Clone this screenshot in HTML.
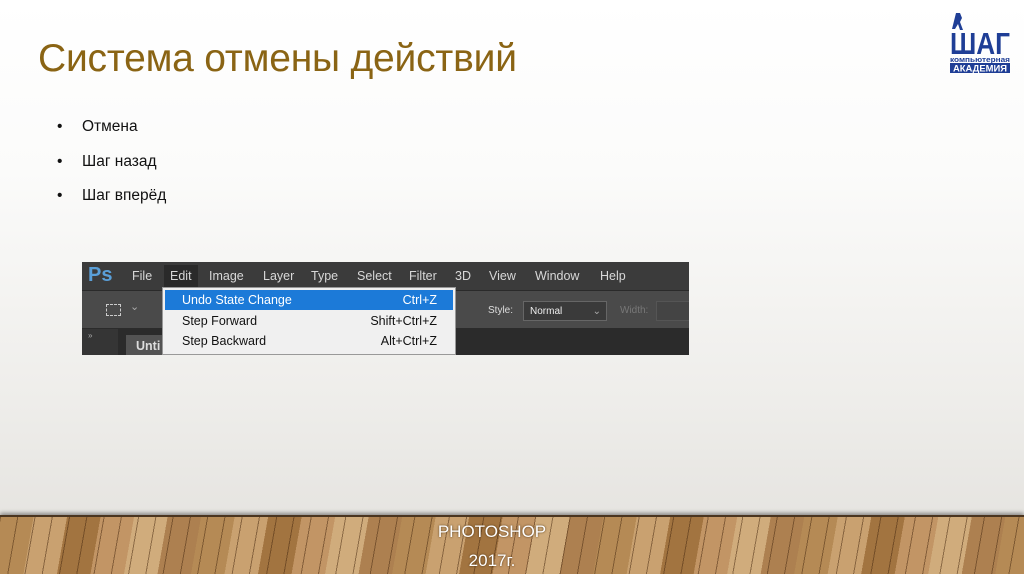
<!DOCTYPE html>
<html><head><meta charset="utf-8"><style>
*{margin:0;padding:0;box-sizing:border-box}
body{width:1024px;height:574px;overflow:hidden;position:relative;font-family:"Liberation Sans",sans-serif;
background:linear-gradient(#ffffff 0%,#fbfbfa 30%,#eeedea 70%,#e2e0dc 100%)}
.t{position:absolute;left:38px;top:37px;font-size:39px;color:#8a6414;white-space:nowrap;letter-spacing:-0.2px}
.b{position:absolute;left:57px;font-size:15.5px;color:#111;white-space:nowrap}
.b span{position:absolute;left:25px;top:0}
.ps{position:absolute;left:82px;top:262px;width:607px;height:93px;background:#2b2b2b;overflow:hidden;font-size:12.5px;color:#d8d8d8}
.mb{position:absolute;left:0;top:0;width:607px;height:28px;background:#3b3b3b}
.mb span{position:absolute;top:7px}
.ob{position:absolute;left:0;top:28px;width:607px;height:38px;background:#4a4a4a;border-top:1px solid #2a2a2a}
.dd{position:absolute;left:80px;top:25px;width:294px;height:68px;background:#f0f0f0;border:1px solid #999;color:#111;font-size:12.5px}
.dd div{position:absolute;left:2px;width:288px;height:20px;line-height:20px}
.dd .l{position:absolute;left:17px}.dd .r{position:absolute;right:16px}
.floor{position:absolute;left:0;top:515px;width:1024px;height:59px;
background:
repeating-linear-gradient(100deg,rgba(70,40,15,.5) 0 1px,transparent 1px 17px),
repeating-linear-gradient(100deg,#b58a55 0 33px,#c9a170 33px 66px,#a27440 66px 99px,#c29565 99px 132px,#d0ac7c 132px 165px,#ad8050 165px 198px);
border-top:2px solid #4a3520;box-shadow:0 -2px 4px rgba(0,0,0,.4)}
.ft{position:absolute;left:0;width:1024px;text-align:center;color:#fff;font-size:17px;text-shadow:0 0 2px #4a3010}
</style></head><body>
<div class="t">Система отмены действий</div>
<div class="b" style="top:118px">•<span>Отмена</span></div>
<div class="b" style="top:153px">•<span>Шаг назад</span></div>
<div class="b" style="top:187px">•<span>Шаг вперёд</span></div>

<svg style="position:absolute;left:948px;top:10px" width="64" height="64" viewBox="0 0 64 64">
<path d="M8 3 l4 0 l2 5 l-2 4 l3 8 l-3 0 l-2-6 l-3 5 l-3 0 z" fill="#1f3e96"/>
<text x="2" y="44" font-family="Liberation Sans" font-weight="bold" font-size="31" fill="#1f3e96" textLength="60" lengthAdjust="spacingAndGlyphs">ШАГ</text>
<text x="2" y="52" font-family="Liberation Sans" font-weight="bold" font-size="7" fill="#1f3e96" textLength="60" lengthAdjust="spacingAndGlyphs">компьютерная</text>
<rect x="2" y="53" width="60" height="10" fill="#1f3e96"/>
<text x="5" y="61.5" font-family="Liberation Sans" font-weight="bold" font-size="9" fill="#fff" textLength="54" lengthAdjust="spacingAndGlyphs">АКАДЕМИЯ</text>
</svg>

<div class="ps">
<div class="mb">
<span style="left:6px;top:2px;font-size:20px;font-weight:bold;color:#5a9fd8">Ps</span>
<span style="left:50px">File</span>
<span style="left:82px;top:3px;background:#2a2a2a;padding:4px 6px;left:82px">Edit</span>
<span style="left:127px">Image</span><span style="left:181px">Layer</span><span style="left:229px">Type</span>
<span style="left:275px">Select</span><span style="left:327px">Filter</span><span style="left:373px">3D</span>
<span style="left:407px">View</span><span style="left:453px">Window</span><span style="left:518px">Help</span>
</div>
<div class="ob">
<div style="position:absolute;left:24px;top:13px;width:15px;height:12px;border:1.5px dashed #ccc"></div>
<span style="position:absolute;left:48px;top:9px;color:#aaa;font-size:11px">⌄</span>
<span style="position:absolute;left:406px;top:14px;font-size:10px;color:#ddd">Style:</span>
<div style="position:absolute;left:441px;top:10px;width:84px;height:20px;background:#3a3a3a;border:1px solid #666;font-size:10px;color:#eee;padding:4px 6px">Normal<span style="position:absolute;right:5px;color:#aaa">⌄</span></div>
<span style="position:absolute;left:538px;top:14px;font-size:10px;color:#777">Width:</span>
<div style="position:absolute;left:574px;top:10px;width:40px;height:20px;background:#444;border:1px solid #555"></div>
</div>
<div style="position:absolute;left:0;top:67px;width:36px;height:26px;background:#353535;color:#aaa;font-size:8px;padding:2px 6px">»</div>
<div style="position:absolute;left:44px;top:73px;width:40px;height:20px;background:#535353;color:#ddd;font-weight:bold;padding:4px 10px">Unti</div>
<div class="dd">
<div style="top:2px;background:#1c7ad8;color:#fff"><span class="l">Undo State Change</span><span class="r">Ctrl+Z</span></div>
<div style="top:23px"><span class="l">Step Forward</span><span class="r">Shift+Ctrl+Z</span></div>
<div style="top:43px"><span class="l">Step Backward</span><span class="r">Alt+Ctrl+Z</span></div>
</div>
</div>

<div class="floor"></div>
<div class="ft" style="top:522px;left:-20px">PHOTOSHOP</div>
<div class="ft" style="top:551px;left:-20px">2017г.</div>
</body></html>
